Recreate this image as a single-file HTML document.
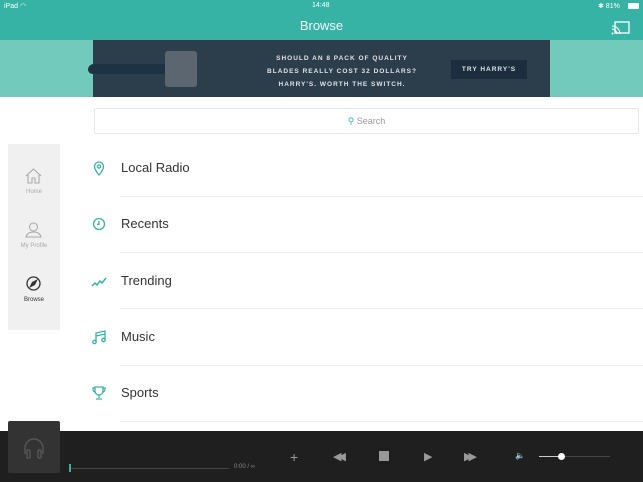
<!DOCTYPE html>
<html><head><style>
*{margin:0;padding:0;box-sizing:border-box}
body{width:643px;height:482px;overflow:hidden;background:#fff;font-family:"Liberation Sans",sans-serif;position:relative}
.a{position:absolute}
.row{position:absolute;left:121px;font-size:13px;color:#333;}
.sep{position:absolute;left:120px;right:0;height:1px;background:#eee}
.ic{position:absolute;left:91px}
</style></head><body>
<div class="a" style="left:0;top:0;width:643px;height:40px;background:#37b3a5"></div>
<div class="a" style="left:4px;top:2px;font-size:7px;color:#fff">iPad ◠</div>
<div class="a" style="left:312px;top:2px;font-size:7px;color:#fff">14:48</div>
<div class="a" style="left:598px;top:2px;font-size:7px;color:#fff">✱ 81%</div>
<div class="a" style="left:628px;top:3px;width:11px;height:6px;background:#fff;border-radius:1px"></div>
<div class="a" style="left:0;top:18px;width:643px;text-align:center;font-size:13px;color:#eefaf8">Browse</div>
<svg class="a" style="left:611px;top:21px" width="19" height="14"><rect x="4" y="1" width="14" height="11" fill="none" stroke="#fff" stroke-width="1.3"/><path d="M1 8a5 5 0 015 5M1 5a8 8 0 018 8" stroke="#fff" fill="none"/><circle cx="1.5" cy="12.5" r="1" fill="#fff"/></svg>
<div class="a" style="left:0;top:40px;width:643px;height:57px;background:#72cabd"></div>
<div class="a" style="left:93px;top:40px;width:457px;height:57px;background:#2c3d4c"></div>
<div class="a" style="left:88px;top:64px;width:80px;height:10px;background:#1d3343;border-radius:5px;transform:skewX(-5deg)"></div>
<div class="a" style="left:165px;top:51px;width:32px;height:36px;background:#5c6670;border-radius:3px"></div>
<div class="a" style="left:262px;top:52px;width:160px;text-align:center;font-size:6.5px;letter-spacing:1px;line-height:13px;color:#dfe3e6;font-weight:bold">SHOULD AN 8 PACK OF QUALITY<br>BLADES REALLY COST 32 DOLLARS?<br>HARRY'S. WORTH THE SWITCH.</div>
<div class="a" style="left:451px;top:60px;width:76px;height:19px;background:#1c2e3e;color:#dfe3e6;font-size:6.5px;font-weight:bold;letter-spacing:1px;text-align:center;line-height:19px">TRY HARRY'S</div>
<div class="a" style="left:94px;top:108px;width:545px;height:26px;border:1px solid #e6e6e6;border-radius:2px;text-align:center;font-size:9px;color:#999;line-height:25px"><span style="color:#37b3a5">⚲</span> Search</div>
<div class="a" style="left:8px;top:144px;width:52px;height:186px;background:#f0f0f1"></div>
<svg class="a" style="left:25px;top:168px" width="17" height="16" fill="none" stroke="#aaa" stroke-width="1.1"><path d="M1 8L8.5 1 16 8M3 7v8h4v-5h3v5h4V7"/></svg>
<div class="a" style="left:8px;top:189px;width:52px;text-align:center;font-size:6px;color:#aaa">Home</div>
<svg class="a" style="left:25px;top:222px" width="17" height="16" fill="none" stroke="#aaa" stroke-width="1.1"><circle cx="8.5" cy="5" r="4"/><path d="M1 15c1-4 4-5 7.5-5s6.5 1 7.5 5z"/></svg>
<div class="a" style="left:8px;top:243px;width:52px;text-align:center;font-size:6px;color:#aaa">My Profile</div>
<svg class="a" style="left:26px;top:276px" width="15" height="15" fill="none" stroke="#333" stroke-width="1.3"><circle cx="7.5" cy="7.5" r="6.5"/><path d="M10.5 4.5L8.5 8.5 4.5 10.5 6.5 6.5z" fill="#333"/></svg>
<div class="a" style="left:8px;top:297px;width:52px;text-align:center;font-size:6px;color:#333">Browse</div>

<svg class="ic" style="top:160px" width="16" height="16" fill="none" stroke="#37b3a5" stroke-width="1.3"><path d="M8 15s-4.5-5-4.5-8.5a4.5 4.5 0 019 0C12.5 10 8 15 8 15z"/><circle cx="8" cy="6.5" r="1.6"/></svg>
<div class="row" style="top:160px">Local Radio</div>
<div class="sep" style="top:196px"></div>
<svg class="ic" style="top:216px" width="16" height="16" fill="none" stroke="#37b3a5" stroke-width="1.3"><circle cx="8" cy="8" r="5.5"/><path d="M8 5v3.3H6"/></svg>
<div class="row" style="top:216px">Recents</div>
<div class="sep" style="top:252px"></div>
<svg class="ic" style="top:273px" width="16" height="16" fill="none" stroke="#37b3a5" stroke-width="1.5"><path d="M1 13l3-3 2 2 3-4 2 2 4-5"/></svg>
<div class="row" style="top:273px">Trending</div>
<div class="sep" style="top:308px"></div>
<svg class="ic" style="top:329px" width="16" height="16" fill="none" stroke="#37b3a5" stroke-width="1.3"><path d="M5 13V4l9-2v9M5 7l9-2"/><circle cx="3.5" cy="13" r="1.7"/><circle cx="12.5" cy="11" r="1.7"/></svg>
<div class="row" style="top:329px">Music</div>
<div class="sep" style="top:365px"></div>
<svg class="ic" style="top:385px" width="16" height="16" fill="none" stroke="#37b3a5" stroke-width="1.3"><path d="M4 2h8v4a4 4 0 01-8 0zM4 3H2v1.5A2.5 2.5 0 004.5 7M12 3h2v1.5A2.5 2.5 0 0111.5 7M8 10v3M5 14h6"/></svg>
<div class="row" style="top:385px">Sports</div>
<div class="sep" style="top:421px"></div>

<div class="a" style="left:0;top:431px;width:643px;height:51px;background:#1f1f1f"></div>
<div class="a" style="left:8px;top:421px;width:52px;height:52px;background:#333;border-radius:2px"></div>
<svg class="a" style="left:22px;top:436px" width="24" height="24" fill="none" stroke="#555" stroke-width="1.5"><path d="M3 18v-6a9 9 0 0118 0v6"/><rect x="5" y="14" width="3" height="8" rx="1"/><rect x="16" y="14" width="3" height="8" rx="1"/></svg>
<div class="a" style="left:69px;top:464px;width:2px;height:8px;background:#37b3a5"></div>
<div class="a" style="left:71px;top:468px;width:158px;height:1px;background:#444"></div>
<div class="a" style="left:234px;top:464px;font-size:6px;color:#888">0:00 / ∞</div>
<div class="a" style="left:290px;top:449px;font-size:14px;color:#999">+</div>
<div class="a" style="left:333px;top:450px;font-size:11px;color:#999;letter-spacing:-4px">◀◀</div>
<div class="a" style="left:379px;top:451px;width:10px;height:10px;background:#999"></div>
<div class="a" style="left:424px;top:450px;font-size:11px;color:#999">▶</div>
<div class="a" style="left:464px;top:450px;font-size:11px;color:#999;letter-spacing:-4px">▶▶</div>
<div class="a" style="left:515px;top:451px;font-size:8px;color:#999">🔈</div>
<div class="a" style="left:539px;top:456px;width:71px;height:1px;background:#444"></div>
<div class="a" style="left:539px;top:456px;width:22px;height:1px;background:#ccc"></div>
<div class="a" style="left:558px;top:453px;width:7px;height:7px;border-radius:50%;background:#fff"></div>
</body></html>
